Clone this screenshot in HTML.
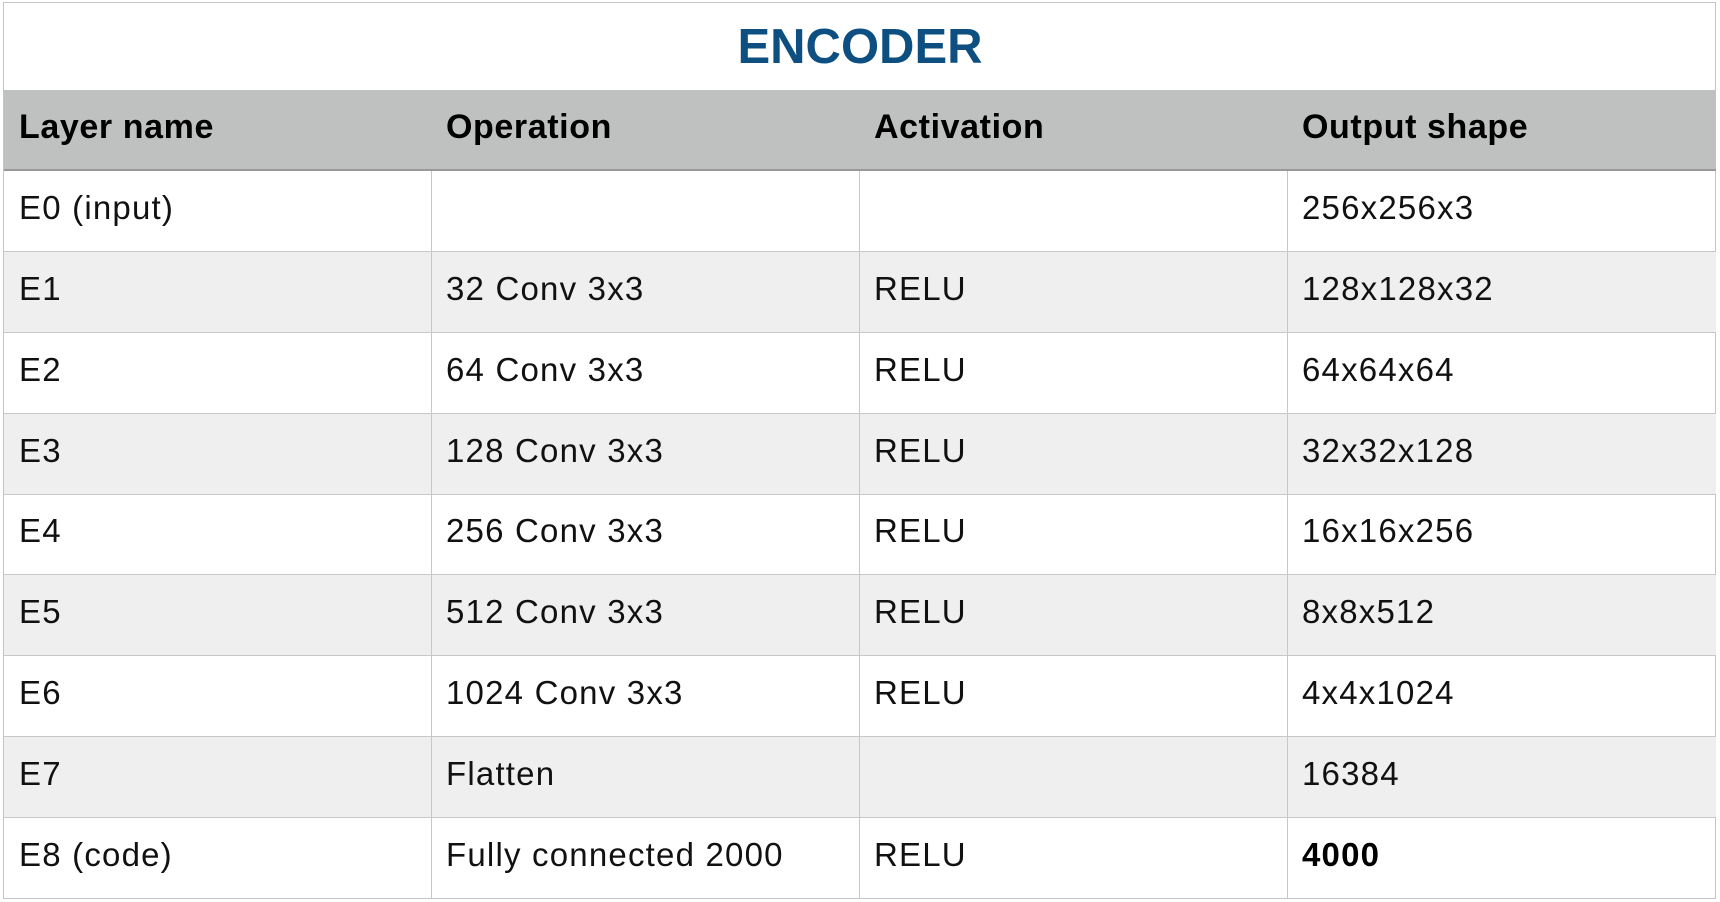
<!DOCTYPE html>
<html><head><meta charset="utf-8"><style>
html,body{margin:0;padding:0;background:#fff;}
body{width:1720px;height:902px;position:relative;overflow:hidden;font-family:"Liberation Sans",Arial,sans-serif;}
.frame{position:absolute;left:3px;top:2px;width:1713px;height:897px;border:1px solid #c4c4c4;box-sizing:border-box;}
.title{position:absolute;left:0;width:1720px;top:17px;text-align:center;font-size:49px;font-weight:bold;color:#0c4f80;line-height:60px;}
.hdr{position:absolute;left:4px;width:1712px;top:90px;height:81px;background:#bfc1c0;border-bottom:2px solid #999;box-sizing:border-box;}
.row{position:absolute;left:4px;width:1712px;height:81px;border-bottom:1px solid #c8c8c8;box-sizing:border-box;}
.alt{background:#efefef;}
.vl{position:absolute;top:171px;height:728px;width:1px;background:#c8c8c8;}
.t{position:absolute;font-size:33px;color:#111;line-height:40px;letter-spacing:1.2px;}
.h{font-size:34px;font-weight:bold;color:#000;letter-spacing:0.6px;}
</style></head><body>
<div class="frame"></div>
<div class="title">ENCODER</div>
<div class="hdr"></div>
<div class="row" style="top:171px"></div>
<div class="row alt" style="top:252px"></div>
<div class="row" style="top:333px"></div>
<div class="row alt" style="top:414px"></div>
<div class="row" style="top:494px"></div>
<div class="row alt" style="top:575px"></div>
<div class="row" style="top:656px"></div>
<div class="row alt" style="top:737px"></div>
<div class="row" style="top:817px;height:82px;border-bottom:none"></div>
<div class="vl" style="left:431px"></div>
<div class="vl" style="left:859px"></div>
<div class="vl" style="left:1287px"></div>
<div class="t h" style="left:19px;top:107px">Layer name</div>
<div class="t h" style="left:446px;top:107px">Operation</div>
<div class="t h" style="left:874px;top:107px">Activation</div>
<div class="t h" style="left:1302px;top:107px">Output shape</div>

<div class="t" style="left:19px;top:188px">E0 (input)</div>
<div class="t" style="left:1302px;top:188px">256x256x3</div>

<div class="t" style="left:19px;top:269px">E1</div>
<div class="t" style="left:446px;top:269px">32 Conv 3x3</div>
<div class="t" style="left:874px;top:269px">RELU</div>
<div class="t" style="left:1302px;top:269px">128x128x32</div>

<div class="t" style="left:19px;top:350px">E2</div>
<div class="t" style="left:446px;top:350px">64 Conv 3x3</div>
<div class="t" style="left:874px;top:350px">RELU</div>
<div class="t" style="left:1302px;top:350px">64x64x64</div>

<div class="t" style="left:19px;top:431px">E3</div>
<div class="t" style="left:446px;top:431px">128 Conv 3x3</div>
<div class="t" style="left:874px;top:431px">RELU</div>
<div class="t" style="left:1302px;top:431px">32x32x128</div>

<div class="t" style="left:19px;top:511px">E4</div>
<div class="t" style="left:446px;top:511px">256 Conv 3x3</div>
<div class="t" style="left:874px;top:511px">RELU</div>
<div class="t" style="left:1302px;top:511px">16x16x256</div>

<div class="t" style="left:19px;top:592px">E5</div>
<div class="t" style="left:446px;top:592px">512 Conv 3x3</div>
<div class="t" style="left:874px;top:592px">RELU</div>
<div class="t" style="left:1302px;top:592px">8x8x512</div>

<div class="t" style="left:19px;top:673px">E6</div>
<div class="t" style="left:446px;top:673px">1024 Conv 3x3</div>
<div class="t" style="left:874px;top:673px">RELU</div>
<div class="t" style="left:1302px;top:673px">4x4x1024</div>

<div class="t" style="left:19px;top:754px">E7</div>
<div class="t" style="left:446px;top:754px">Flatten</div>
<div class="t" style="left:1302px;top:754px">16384</div>

<div class="t" style="left:19px;top:835px">E8 (code)</div>
<div class="t" style="left:446px;top:835px">Fully connected 2000</div>
<div class="t" style="left:874px;top:835px">RELU</div>
<div class="t" style="left:1302px;top:835px;font-weight:bold;color:#000">4000</div>
</body></html>
